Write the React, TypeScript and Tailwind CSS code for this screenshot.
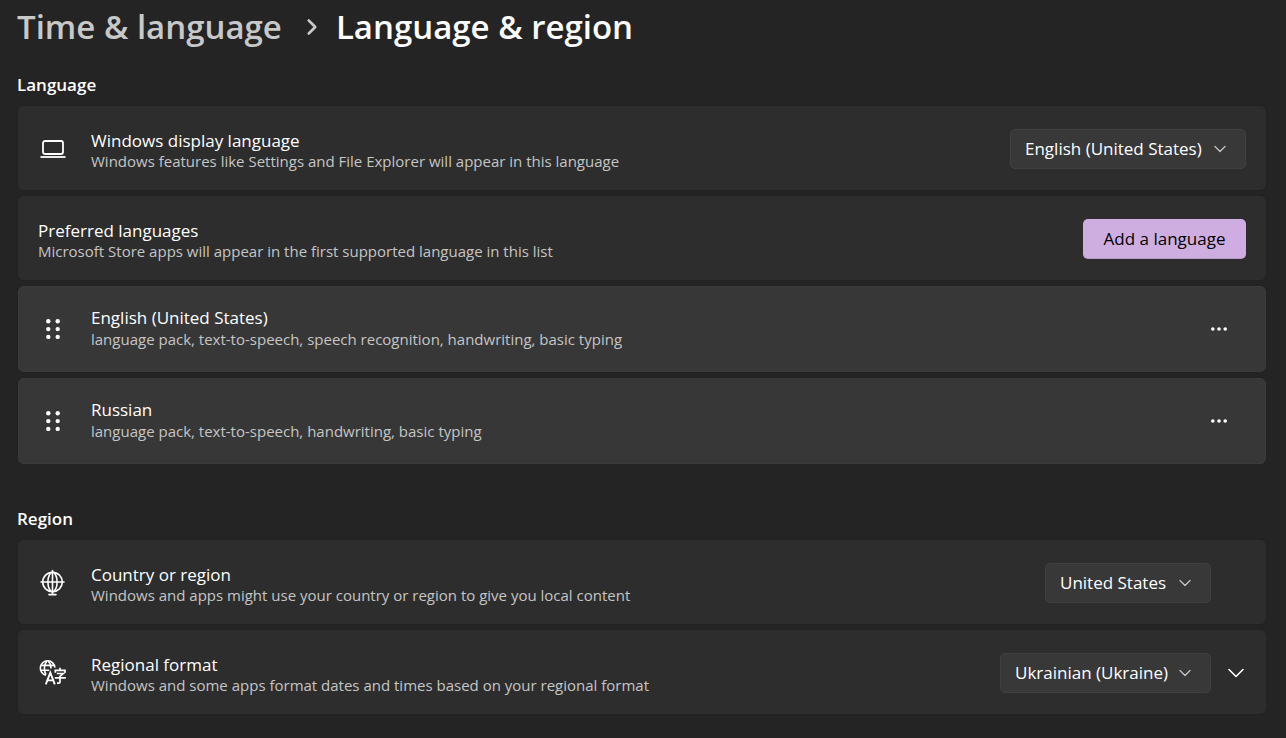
import React, { useId } from 'react';
import { ChevronDown, ChevronRight } from 'lucide-react';

interface LanguageEntry {
    name: string;
    features: string;
}

const languages: LanguageEntry[] = [
    { name: 'English (United States)', features: 'language pack, text-to-speech, speech recognition, handwriting, basic typing' },
    { name: 'Russian', features: 'language pack, text-to-speech, handwriting, basic typing' }
];

const LaptopIcon = () => (
    <svg className="h-7 w-7" viewBox="0 0 28 28" fill="none" stroke="currentColor" aria-hidden="true">
        <rect x="4" y="6" width="20" height="13" rx="2" strokeWidth="1.8" />
        <path d="M1.5 22h25" strokeWidth="1.8" />
    </svg>
);

const GlobeIcon = () => (
    <svg className="h-7 w-7" viewBox="0 0 28 28" fill="none" stroke="currentColor" strokeWidth="1.6" strokeLinecap="round" aria-hidden="true">
        <circle cx="13.5" cy="13" r="9.8" />
        <ellipse cx="13.5" cy="13" rx="4.6" ry="9.8" />
        <path d="M2 13h23M13.5 1.5v24M10 25.6h7" />
    </svg>
);

const RegionalFormatIcon = () => (
    <svg className="h-7 w-7" viewBox="0 0 28 28" fill="none" stroke="currentColor" strokeWidth="1.6" aria-hidden="true">
        {/* Globe, cut off where the letters start */}
        <path d="M7 16.2A7.3 7.3 0 1 1 15.9 8.6" />
        <path d="M7 15.6C4.6 12 4.8 5.5 8 2M9.2 2C11.4 4 12 6.5 12 9.5M1.8 6.4h13.8M1.6 11.3h8.6" />
        {/* Latin letter */}
        <path d="M6.8 25.3L11.3 13.6L15.8 25.3M8.3 21.4h6" strokeWidth="1.9" />
        {/* Ideograph */}
        <path d="M16.3 13.8V11.3H26V13.8M21 8.8v2.5M17.8 14.5h6.4L21 17.3v5.6q0 1.3-1.3 1.3H18M15.8 18.8h11" strokeWidth="1.7" />
    </svg>
);

const DragHandle = () => (
    <svg className="h-7 w-7" viewBox="0 0 28 28" fill="currentColor" aria-hidden="true">
        {[6.3, 14.1, 21.9].map((y) => (
            <React.Fragment key={y}>
                <circle cx="9.3" cy={y} r="2.2" />
                <circle cx="18.7" cy={y} r="2.2" />
            </React.Fragment>
        ))}
    </svg>
);

const MoreIcon = () => (
    <svg className="h-5 w-5" viewBox="0 0 20 20" fill="currentColor" aria-hidden="true">
        <circle cx="3.8" cy="10" r="1.8" />
        <circle cx="10" cy="10" r="1.8" />
        <circle cx="16.2" cy="10" r="1.8" />
    </svg>
);

interface SettingTextProps {
    title: string;
    description: string;
    htmlFor?: string;
}

const SettingText: React.FC<SettingTextProps> = ({ title, description, htmlFor }) => (
    <div className="min-w-0 flex-1 pt-1">
        {htmlFor ? (
            <label htmlFor={htmlFor} className="block text-[17px] leading-5 text-white">{title}</label>
        ) : (
            <h3 className="text-[17px] leading-5 text-white">{title}</h3>
        )}
        <p className="text-[15px] leading-5 text-[#c5c5c5]">{description}</p>
    </div>
);

interface DropdownProps {
    id: string;
    value: string;
    className: string;
}

const Dropdown: React.FC<DropdownProps> = ({ id, value, className }) => (
    <div className={`grid shrink-0 items-center ${className}`}>
        <select
            id={id}
            defaultValue={value}
            className="col-start-1 row-start-1 h-10 w-full appearance-none rounded-[5px] border border-[#404040] bg-[#383838] pl-3.5 pr-10 text-[17px] text-white"
        >
            <option>{value}</option>
        </select>
        <ChevronDown className="pointer-events-none col-start-1 row-start-1 mr-4 h-5 w-5 justify-self-end text-[#c5c5c5]" strokeWidth={1.5} />
    </div>
);

interface SettingCardProps {
    icon?: React.ReactNode;
    title: string;
    description: string;
    value?: string;
    selectWidth?: string;
    trailing?: React.ReactNode;
    children?: React.ReactNode;
}

const SettingCard: React.FC<SettingCardProps> = ({ icon, title, description, value, selectWidth = '', trailing, children }) => {
    const id = useId();

    return (
        <div className="flex h-[84px] items-center rounded-[5px] bg-[#2d2d2d] px-5 pt-0.5 outline outline-[#222222]">
            {icon && <div className="mr-6 ml-px text-white">{icon}</div>}
            <SettingText title={title} description={description} htmlFor={value ? id : undefined} />
            {value && <Dropdown id={id} value={value} className={selectWidth} />}
            {children}
            {trailing}
        </div>
    );
};

const LanguageCard: React.FC<{ language: LanguageEntry }> = ({ language }) => (
    <li className="flex h-[86px] items-center rounded-[5px] border border-[#3a3a3a] bg-[#373737] pl-5 pr-[30px] outline outline-[#222222]">
        <div className="mr-6 text-white">
            <DragHandle />
        </div>
        <div className="min-w-0 flex-1 pb-0.5">
            <h3 className="text-[17px] leading-[22px] text-white">{language.name}</h3>
            <p className="text-[15px] leading-5 text-[#c5c5c5]">{language.features}</p>
        </div>
        <button className="flex h-8 w-8 items-center justify-center text-white" aria-label={`More options for ${language.name}`}>
            <MoreIcon />
        </button>
    </li>
);

export default function App() {
    return (
        <main className="min-h-screen bg-[#242424] pl-[18px] pr-5 pb-6 font-['Open_Sans','Noto_Sans',sans-serif]">
            {/* Breadcrumb */}
            <nav className="-ml-px flex h-[54px] items-center text-[33px] font-semibold" aria-label="Breadcrumb">
                <a href="#time-language" className="text-[#c8c8c8]">Time &amp; language</a>
                <ChevronRight className="mr-2.5 ml-4 h-[26px] w-7 text-[#c8c8c8]" strokeWidth={2.4} />
                <h1 className="text-white">Language &amp; region</h1>
            </nav>

            {/* Language */}
            <section className="pt-[19px]">
                <h2 className="mb-[9px] -ml-px text-[17px] leading-6 font-semibold text-white">Language</h2>
                <div className="flex flex-col gap-1.5">
                    <SettingCard
                        icon={<LaptopIcon />}
                        title="Windows display language"
                        description="Windows features like Settings and File Explorer will appear in this language"
                        value="English (United States)"
                        selectWidth="w-[236px]"
                    />
                    <SettingCard
                        title="Preferred languages"
                        description="Microsoft Store apps will appear in the first supported language in this list"
                    >
                        <button className="h-10 w-[163px] shrink-0 rounded-[5px] border-b border-[#b699c5] bg-[#ceaee1] text-[17px] text-black">
                            Add a language
                        </button>
                    </SettingCard>
                    <ul className="flex flex-col gap-1.5">
                        {languages.map((language) => (
                            <LanguageCard key={language.name} language={language} />
                        ))}
                    </ul>
                </div>
            </section>

            {/* Region */}
            <section className="pt-[43px]">
                <h2 className="mb-[9px] -ml-px text-[17px] leading-6 font-semibold text-white">Region</h2>
                <div className="flex flex-col gap-1.5">
                    <SettingCard
                        icon={<GlobeIcon />}
                        title="Country or region"
                        description="Windows and apps might use your country or region to give you local content"
                        value="United States"
                        selectWidth="mr-[35px] w-[166px]"
                    />
                    <SettingCard
                        icon={<RegionalFormatIcon />}
                        title="Regional format"
                        description="Windows and some apps format dates and times based on your regional format"
                        value="Ukrainian (Ukraine)"
                        selectWidth="w-[211px]"
                        trailing={
                            <button className="-mr-1.5 ml-[9px] flex h-8 w-8 items-center justify-center text-white" aria-label="Expand regional format">
                                <ChevronDown className="h-7 w-7" strokeWidth={1.3} />
                            </button>
                        }
                    />
                </div>
            </section>
        </main>
    );
}
